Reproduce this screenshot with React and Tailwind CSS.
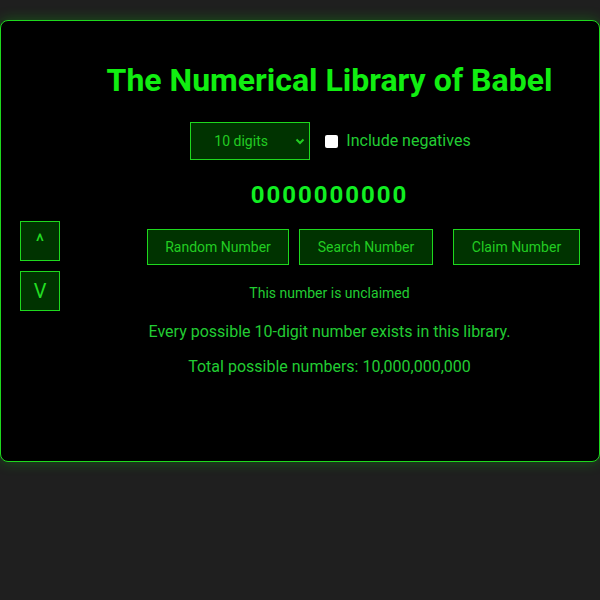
import React from "react";

export default function App() {
  return (
    <div
      className="w-[600px] h-[600px] bg-[#1f1f1f] pt-[20px] overflow-hidden"
      style={{ fontFamily: "Roboto, 'Liberation Sans', sans-serif" }}
    >
      <div className="h-[442px] bg-black border border-[#1ed81e] rounded-[8px] shadow-[0_0_14px_rgba(0,255,0,0.25)] flex">
        <div className="w-[59px] shrink-0 pl-[19px] pt-[200px] flex flex-col gap-[10px]">
          <button className="w-[40px] h-[40px] bg-[#003300] border border-[#1ed81e] text-[#22dd22] text-[20px] leading-none flex items-center justify-center">
            ^
          </button>
          <button className="w-[40px] h-[40px] bg-[#003300] border border-[#1ed81e] text-[#22dd22] text-[20px] leading-none flex items-center justify-center">
            V
          </button>
        </div>
        <div className="flex-1 flex flex-col items-center">
          <h1 className="mt-[39px] text-[32px] leading-[40px] font-bold text-[#11ee11]">
            The Numerical Library of Babel
          </h1>
          <div className="mt-[22px] ml-[2px] flex items-center">
            <div className="relative w-[120px] h-[38px] bg-[#003300] border border-[#1ed81e] flex items-center">
              <span className="pl-[23px] text-[14px] text-[#22cc22]">10 digits</span>
              <svg
                className="absolute right-[4px] top-[15px]"
                width="10"
                height="7"
                viewBox="0 0 10 7"
              >
                <path d="M1.5 1.5 L5 5 L8.5 1.5" fill="none" stroke="#22cc22" strokeWidth="2" />
              </svg>
            </div>
            <div className="ml-[15px] w-[13px] h-[13px] bg-white rounded-[2px]" />
            <span className="ml-[8px] text-[16px] text-[#22cc33]">Include negatives</span>
          </div>
          <div className="mt-[19px] text-[24px] leading-[32px] font-bold tracking-[2px] text-[#11ee22]">
            0000000000
          </div>
          <div className="mt-[18px] flex self-stretch pl-[87px]">
            <button className="w-[142px] h-[36px] bg-[#003300] border border-[#1ed81e] text-[14px] text-[#22cc22]">
              Random Number
            </button>
            <button className="ml-[10px] w-[134px] h-[36px] bg-[#003300] border border-[#1ed81e] text-[14px] text-[#22cc22]">
              Search Number
            </button>
            <button className="ml-[20px] w-[127px] h-[36px] bg-[#003300] border border-[#1ed81e] text-[14px] text-[#22cc22]">
              Claim Number
            </button>
          </div>
          <div className="mt-[18px] text-[14px] leading-[20px] text-[#22cc33]">
            This number is unclaimed
          </div>
          <div className="mt-[17px] text-[16px] leading-[24px] text-[#22cc33]">
            Every possible 10-digit number exists in this library.
          </div>
          <div className="mt-[11px] text-[16px] leading-[24px] text-[#22cc33]">
            Total possible numbers: 10,000,000,000
          </div>
        </div>
      </div>
    </div>
  );
}
